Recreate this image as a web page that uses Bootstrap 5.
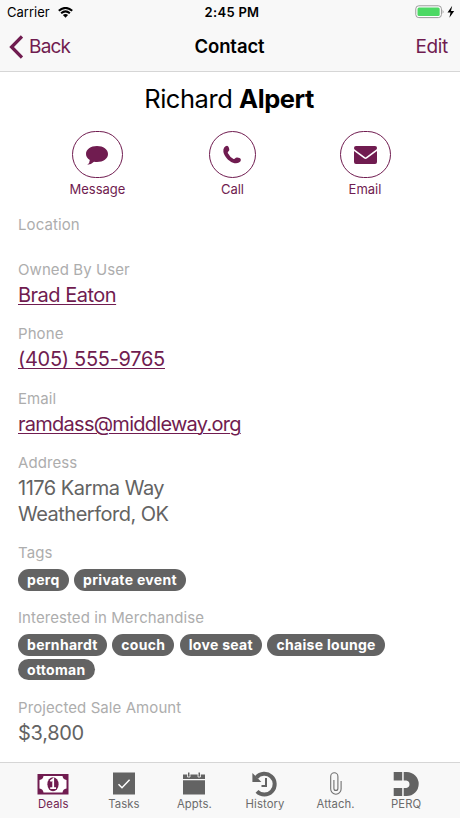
<!DOCTYPE html>
<html lang="en">
<head>
<meta charset="utf-8">
<meta name="viewport" content="width=device-width, initial-scale=1">
<title>Contact</title>
<link href="https://cdn.jsdelivr.net/npm/bootstrap@5.3.0/dist/css/bootstrap.min.css" rel="stylesheet">
<style>
:root{--plum:#701c50;--ink:#636363}
body{font-family:Inter,"Liberation Sans",sans-serif;height:818px;overflow:hidden;color:var(--ink)}
a,a:hover{color:var(--plum)}
svg{display:block;flex:none}
.topbar{height:72px;background:#f8f8f8;border-bottom:1px solid #d6d6d6}
.status{height:23px;padding:1px 5px 0 7px;font-size:13px;line-height:22px}
.side{width:150px}
.status .side:last-child{width:148px}
.status .clock{font-weight:600;letter-spacing:.3px}
.navline{height:47px;padding:0 12px 0 9px;font-size:19px;line-height:47px;letter-spacing:-.35px}
.back-text{margin-left:6px;letter-spacing:-.8px}
.heading{font-size:18.5px;font-weight:600;letter-spacing:-.1px;padding-left:2px}
.person{font-size:25.5px;line-height:32px;margin-top:11px;letter-spacing:-.45px;padding-right:2px}
.person b{font-weight:700}
.actions{padding:0 69.5px;margin-top:16px}
.action{font-size:13px;line-height:18px}
.ring{width:51px;height:47px;border:1.3px solid var(--plum);border-radius:24px;margin-bottom:2px}
.ring.round{width:47px}
.details{padding:16px 18px 0}
.field{margin-bottom:15px}
.field:first-child{margin-bottom:15.8px}
.caption{font-size:15px;line-height:22px;margin-bottom:2px;color:#adadad;letter-spacing:.08px}
.value{font-size:20px;line-height:25.4px;min-height:5.2px;letter-spacing:-.5px}
.value.number{letter-spacing:-.3px}
.value.mail{letter-spacing:-.73px}
.value a{text-decoration-thickness:1.3px;text-underline-offset:2px}
.chips{gap:3px 5.5px;padding-top:3.2px;margin-bottom:16.5px}
.chip{font-size:14px;font-weight:700;line-height:21.5px;height:21.5px;padding:0 9px;background:var(--ink);color:#fff;letter-spacing:.3px}
.tabs{height:56px;background:#f8f8f8;border-top:1px solid #d6d6d6;padding:6px 18.5px 0 18px}
.tab{flex:1 1 0;font-size:11.3px;line-height:14px;letter-spacing:.1px;color:#6b6b6b}
.tab svg{height:28px}
.tab.current{color:var(--plum)}
</style>
<script src="https://cdn.jsdelivr.net/npm/bootstrap@5.3.0/dist/js/bootstrap.bundle.min.js"></script>
</head>
<body class="d-flex flex-column bg-white">
<header class="topbar flex-shrink-0">
  <div class="status d-flex align-items-center justify-content-between text-black">
    <div class="side d-flex align-items-center"><span>Carrier</span>
      <svg class="ms-2" width="15" height="11" viewBox="0 0 15 11"><path d="M.8 3.8Q7.5-1.9 14.2 3.8M3.1 6.2Q7.5 2.5 11.9 6.2" fill="none" stroke="#000" stroke-width="2.1"/><path d="M4.9 8Q7.5 5.8 10.1 8L7.5 10.8Z"/></svg>
    </div>
    <span class="clock">2:45 PM</span>
    <div class="side d-flex align-items-center justify-content-end">
      <svg width="40" height="14" viewBox="0 0 40 14"><rect x=".8" y=".8" width="25.6" height="11.8" rx="3" fill="#fff" stroke="#999"/><rect x="2.5" y="2.4" width="22.2" height="8.6" rx="1.5" fill="#4cd964"/><path d="M27.6 4.6q1.8 2.1 0 4.2z" fill="#999"/><path d="M37.2.8 32.5 7.6h3L34.4 12.7 39.2 5.9H36z"/></svg>
    </div>
  </div>
  <nav class="navline d-flex align-items-center justify-content-between">
    <a class="side d-flex align-items-center text-decoration-none" href="#"><svg width="14" height="24" viewBox="0 0 14 24"><path d="M13 1.500 2.600 12 13 22.500" fill="none" stroke="#701c50" stroke-width="3.300"/></svg><span class="back-text">Back</span></a>
    <span class="heading text-black">Contact</span>
    <a class="side text-end text-decoration-none" href="#">Edit</a>
  </nav>
</header>
<main class="flex-grow-1 overflow-hidden">
  <div class="person text-center text-black">Richard <b>Alpert</b></div>
  <div class="actions d-flex justify-content-between">
    <a class="action d-flex flex-column align-items-center text-decoration-none" href="#"><span class="ring d-flex align-items-center justify-content-center"><svg width="24" height="22" viewBox="0 0 24 22" fill="#701c50"><path d="M12 2C18.300 2 23 5.500 23 10S18.300 18 12 18Q10.600 18 9 17.700Q6.500 20.400 2.300 20.800Q4.800 19 4.800 16Q1 13.500 1 10C1 5.500 5.700 2 12 2Z"/></svg></span>Message</a>
    <a class="action d-flex flex-column align-items-center text-decoration-none" href="#"><span class="ring round d-flex align-items-center justify-content-center"><svg width="20" height="20" viewBox="0 0 20 20" fill="#701c50"><path d="M2.200 2.600Q3.500.8 5 .8Q6.200.9 6.700 2.200L7.300 4.200Q7.500 5.600 6.300 6.400Q5.400 7.100 5.900 8.300Q7.800 12 11.500 13.900Q12.500 14.300 13.200 13.300Q14.100 12.200 15.300 12.500L17.500 13.100Q18.900 13.600 18.900 14.900Q18.700 16.500 17 17.500Q14.500 18.900 11 17.700C6 15.800 2.500 11.500 1.400 7Q1 4.200 2.200 2.600Z"/></svg></span>Call</a>
    <a class="action d-flex flex-column align-items-center text-decoration-none" href="#"><span class="ring d-flex align-items-center justify-content-center"><svg width="23" height="18" viewBox="0 0 23 18" fill="#701c50"><path d="M2 0H21Q23 0 23 2L22.700 3.200 11.500 11.500.300 3.200 0 2Q0 0 2 0Z"/><path d="M0 5 9.800 12.300Q11.500 13.500 13.200 12.300L23 5V16Q23 18 21 18H2Q0 18 0 16Z"/></svg></span>Email</a>
  </div>
  <section class="details">
    <div class="field"><div class="caption">Location</div><div class="value"></div></div>
    <div class="field"><div class="caption">Owned By User</div><div class="value"><a href="#">Brad Eaton</a></div></div>
    <div class="field"><div class="caption">Phone</div><div class="value number"><a href="#">(405) 555-9765</a></div></div>
    <div class="field"><div class="caption">Email</div><div class="value mail"><a href="#">ramdass@middleway.org</a></div></div>
    <div class="field"><div class="caption">Address</div><div class="value">1176 Karma Way<br>Weatherford, OK</div></div>
    <div class="caption">Tags</div>
    <div class="chips d-flex flex-wrap"><span class="chip rounded-pill">perq</span><span class="chip rounded-pill">private event</span></div>
    <div class="caption">Interested in Merchandise</div>
    <div class="chips d-flex flex-wrap"><span class="chip rounded-pill">bernhardt</span><span class="chip rounded-pill">couch</span><span class="chip rounded-pill">love seat</span><span class="chip rounded-pill">chaise lounge</span><span class="chip rounded-pill">ottoman</span></div>
    <div class="caption">Projected Sale Amount</div><div class="value number">$3,800</div>
  </section>
</main>
<nav class="tabs d-flex flex-shrink-0">
  <a class="tab current d-flex flex-column align-items-center text-decoration-none" href="#"><svg width="32" height="28" viewBox="0 0 32 28"><path fill="#701c50" d="M.5 5h31v20.500H.5z"/><path fill="#fff" d="M6.500 7h19q.4 3.500 4 4v8.500q-3.600.5-4 4h-19q-.4-3.500-4-4V11q3.600-.5 4-4z"/><ellipse cx="16" cy="15.200" rx="5.600" ry="7" fill="#701c50"/><path d="M13.400 12.200 16.200 10V18.800M13.200 19.200H19" fill="none" stroke="#fff" stroke-width="1.800"/></svg>Deals</a>
  <a class="tab d-flex flex-column align-items-center text-decoration-none" href="#"><svg width="24" height="28" viewBox="0 0 24 28"><path fill="#636363" d="M1 3.500h22v22H1z"/><path d="m6.500 15.200 3.500 3.500 7.600-8" fill="none" stroke="#fff" stroke-width="1.500"/></svg>Tasks</a>
  <a class="tab d-flex flex-column align-items-center text-decoration-none" href="#"><svg width="24" height="28" viewBox="0 0 24 28"><path fill="#636363" d="M1 5.500h22V10H1zM1 11.200h22V25.500H1zM6 3.500h1.500v4H6zM16.500 3.500H18v4h-1.500z"/><path d="M5.500 5v3h2.500V5M16 5v3h2.500V5" fill="none" stroke="#f8f8f8" stroke-width=".8"/></svg>Appts.</a>
  <a class="tab d-flex flex-column align-items-center text-decoration-none" href="#"><svg width="26" height="28" viewBox="0 0 26 28"><path d="M4.500 8.500A10.300 10.300 0 1 1 5 22.300" fill="none" stroke="#636363" stroke-width="4"/><path fill="#636363" d="M.4 4v9h9z"/><path d="M14 9v8H9.500" fill="none" stroke="#636363" stroke-width="2"/></svg>History</a>
  <a class="tab d-flex flex-column align-items-center text-decoration-none" href="#"><svg width="14" height="28" viewBox="0 0 14 28"><path d="M12.100 12v8a5.200 5.200 0 0 1-10.400 0V7.400a3.600 3.600 0 0 1 7.200 0v12a2 2 0 0 1-4 0V11" fill="none" stroke="#707070" stroke-width="1.100"/></svg>Attach.</a>
  <a class="tab d-flex flex-column align-items-center text-decoration-none" href="#"><svg width="26" height="28" viewBox="0 0 26 28"><path fill="#636363" d="M.7 3h8.500v8.500H.7zM.7 19h8.500v8H.7zM10.700 3h3a12 12 0 0 1 0 24h-3v-8h2.600a3.800 3.800 0 0 0 0-7.500h-2.600z"/></svg>PERQ</a>
</nav>
</body>
</html>
